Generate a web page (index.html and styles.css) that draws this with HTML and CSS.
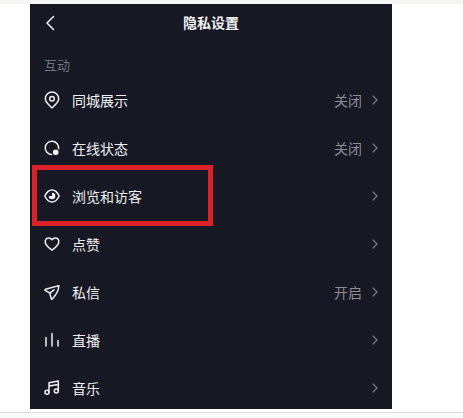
FILE: index.html
```html
<!DOCTYPE html>
<html lang="zh-CN">
<head>
  <meta charset="UTF-8">
  <meta name="viewport" content="width=device-width, initial-scale=1.0">
  <title>隐私设置</title>
  <link rel="stylesheet" href="styles.css">
</head>
<body>
  <main class="article">
    <section class="phone">
      <header class="topbar">
        <button class="back" type="button" aria-label="返回">
          <svg width="10" height="16" viewBox="0 0 10 16"><path d="M8.500 1.500 2 8l6.500 6.500"/></svg>
        </button>
        <h1 class="title">隐私设置</h1>
      </header>

      <h2 class="group">互动</h2>

      <nav class="list">
        <a class="row" href="#city">
          <svg class="icon" viewBox="0 0 16 18"><path d="M8 17C5.500 14.800 1.300 11.400 1.300 7.600a6.700 6.600 0 0 1 13.400 0C14.700 11.400 10.500 14.800 8 17z"/><circle cx="8" cy="7.700" r="2.300"/></svg>
          <span class="label">同城展示</span>
          <span class="value">关闭</span>
          <svg class="arrow" viewBox="0 0 6 10"><path d="M1 1l4 4-4 4"/></svg>
        </a>
        <a class="row" href="#online">
          <svg class="icon" viewBox="0 0 16 18"><path d="M7.500 15.600A6.700 6.700 0 1 1 14.600 9.700"/><circle class="solid" cx="11.700" cy="13.200" r="2.800"/></svg>
          <span class="label">在线状态</span>
          <span class="value">关闭</span>
          <svg class="arrow" viewBox="0 0 6 10"><path d="M1 1l4 4-4 4"/></svg>
        </a>
        <a class="row marked" href="#visitors">
          <svg class="icon" viewBox="0 0 16 18"><path d="M.8 9C2.600 5.200 5 3 8 3S13.400 5.200 15.200 9C13.400 12.800 11 15 8 15S2.600 12.800.8 9z"/><path class="solid" d="M8 5.700v3.300H4.700a3.300 3.300 0 1 0 3.300-3.300z"/></svg>
          <span class="label">浏览和访客</span>
          <svg class="arrow" viewBox="0 0 6 10"><path d="M1 1l4 4-4 4"/></svg>
        </a>
        <a class="row" href="#likes">
          <svg class="icon" viewBox="0 0 16 18"><path d="M8 15.200C4.500 12.700 1.200 10 1.200 6.700 1.200 4.400 2.800 2.900 4.700 2.900 6.100 2.900 7.300 3.600 8 4.800 8.700 3.600 9.900 2.900 11.300 2.900c1.900 0 3.500 1.500 3.500 3.800 0 3.300-3.300 6-6.800 8.500z"/></svg>
          <span class="label">点赞</span>
          <svg class="arrow" viewBox="0 0 6 10"><path d="M1 1l4 4-4 4"/></svg>
        </a>
        <a class="row" href="#messages">
          <svg class="icon" viewBox="0 0 16 18"><path d="M14.800 2.600 1.500 6.300c-.6.200-.7.700-.2 1.100L5.800 10.200l1.500 5.500c.2.600.8.600 1.200.1C12.500 11.500 14.800 8 14.800 2.600zM5.800 10.200l4.200-3.400"/></svg>
          <span class="label">私信</span>
          <span class="value">开启</span>
          <svg class="arrow" viewBox="0 0 6 10"><path d="M1 1l4 4-4 4"/></svg>
        </a>
        <a class="row" href="#live">
          <svg class="icon" viewBox="0 0 16 18"><path d="M2 6.500V15M8 2.500V15M14 9.500V15"/></svg>
          <span class="label">直播</span>
          <svg class="arrow" viewBox="0 0 6 10"><path d="M1 1l4 4-4 4"/></svg>
        </a>
        <a class="row" href="#music">
          <svg class="icon" viewBox="0 0 16 18"><path d="M5 13.200V3.700l9.300-1.600v9.700M5 7l9.300-1.600"/><circle cx="3" cy="13.300" r="2"/><circle cx="12.300" cy="12" r="2"/></svg>
          <span class="label">音乐</span>
          <svg class="arrow" viewBox="0 0 6 10"><path d="M1 1l4 4-4 4"/></svg>
        </a>
      </nav>
    </section>
  </main>
</body>
</html>
```

FILE: styles.css
```css
*,
*::after {
  box-sizing: border-box;
}

body {
  margin: 0;
  background-color: #fafafa;
  font-family: "Liberation Sans", "Noto Sans CJK SC", sans-serif;
  font-size: 14px;
}

.article {
  padding: 0 71px 3px 30px;
  background-color: #fff;
  border-top: 4px solid #f5f5f3;
  border-bottom: 1px solid #dcdcdc;
}

.phone {
  padding-bottom: 1px;
  background-color: #161823;
  color: #f0f0f2;
}

/* Header: the third column balances the back button */
.topbar {
  display: grid;
  grid-template-columns: 40px 1fr 40px;
  align-items: center;
  height: 38px;
}

.back {
  display: flex;
  justify-content: center;
  padding: 0;
  border: 0;
  background: none;
  color: inherit;
  cursor: pointer;
}

.title {
  margin: 0;
  font-size: 14px;
  font-weight: bold;
  line-height: 20px;
  text-align: center;
}

.group {
  margin: 0;
  padding: 14px 14px 4px;
  color: #74757d;
  font-size: 13px;
  font-weight: normal;
  line-height: 20px;
}

.list {
  display: flex;
  flex-direction: column;
  gap: 8px;
}

.row {
  display: flex;
  align-items: center;
  height: 40px;
  padding: 0 14px;
  color: inherit;
  text-decoration: none;
}

.label {
  flex: 1;
  margin-left: 12px;
}

.value {
  margin-right: 10px;
  color: #8b8c94;
}

svg {
  flex: none;
  fill: none;
  stroke: currentColor;
  stroke-width: 1.5;
  stroke-linecap: round;
  stroke-linejoin: round;
}

.icon {
  width: 16px;
  height: 18px;
}

.icon .solid {
  fill: currentColor;
  stroke: none;
}

.arrow {
  width: 6px;
  height: 10px;
  color: #777880;
  stroke-width: 1.2;
}

/* Red frame around the entry being explained */
.marked {
  position: relative;
}

.marked::after {
  content: "";
  position: absolute;
  top: -11px;
  bottom: -10px;
  left: 2px;
  width: 181px;
  border: 5px solid #dc2228;
}
```
